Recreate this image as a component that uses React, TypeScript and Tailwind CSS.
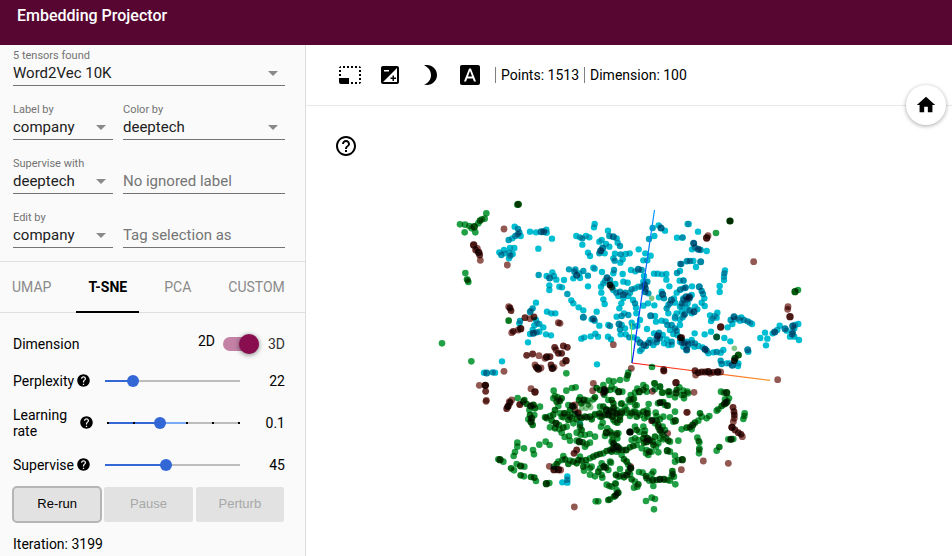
import { useState } from 'react';
import type { ReactNode } from 'react';
import {
  MdBrightness3,
  MdExposure,
  MdFontDownload,
  MdHelp,
  MdHelpOutline,
  MdHome,
  MdPhotoSizeSelectSmall,
} from 'react-icons/md';

type Rgb = [number, number, number];
type Kind = 'cyan' | 'green' | 'brown' | 'pale';

const KINDS: Record<Kind, { color: Rgb; radius: number }> = {
  cyan: { color: [0, 191, 210], radius: 3.2 },
  green: { color: [34, 160, 69], radius: 3.3 },
  brown: { color: [146, 88, 82], radius: 3.4 },
  pale: { color: [130, 200, 140], radius: 2.8 },
};

interface Cluster {
  origin: [number, number];
  points: Partial<Record<Kind, string>>;
}

// Each entry is "x,y" or "x,y,count", in thirds of a unit from the cluster's origin.
const CLUSTERS: Cluster[] = [
  {
    origin: [430, 190],
    points: {
      green:
        '169,70 90,103 105,104 104,127 133,110,3 125,115 136,127 150,92,2 156,88 164,86 145,100 265,43,3 262,44 106,249 113,271 111,268 115,276 118,108',
      cyan:
        '254,110 264,117,2 268,127,2 263,133,2 272,138 256,138,2 247,145 236,150,2 300,125 318,127 333,125,3 341,125,3 349,119 350,128 366,146 325,176 208,187 222,180 214,195,2 225,190 240,174 253,174 238,188 241,197,2 237,205 248,192 326,255,2 367,247 359,264,3 350,258 372,258 379,269 358,286 358,300 318,338 308,355,2 300,366,2 351,365 364,370 376,370 388,290',
      brown:
        '222,117 232,225 151,211 131,165,3 137,180,2 146,187,3 149,195,2 142,175 236,350 240,354,2 243,362,2 285,383,2 312,381,2 300,386',
    },
  },
  {
    origin: [560, 190],
    points: {
      cyan:
        '104,102 102,112 144,122 49,138 67,145,2 78,138 88,142 67,164 60,142 148,138,2 160,140,3 170,145 118,155 125,150 138,162 122,182,4 128,174,3 118,190,2 134,190 148,170 173,158 180,168,2 84,188 90,198 165,191 164,212,2 160,205 182,193,2 197,192 209,190 188,208 181,218 236,178 100,233 104,236 27,238,2 46,238,2 50,256,4 43,245,2 70,243,2 84,257,2 40,265 58,250 60,264 12,270 6,292 22,312,2 34,331 40,340 56,352 70,361 70,382,3 84,289 126,246 141,263,4 150,270,2 162,240,2 160,250 188,252 130,280 123,290 124,308 135,273 166,282 150,285 190,275 203,278 169,308,2 180,305,2 190,314,3 196,308,2 205,318 175,318 190,325 160,300 213,240 235,238,3 245,240,2 226,244 256,190 272,197 250,211 262,211 278,114,2 303,114,4 296,106 315,122 283,138 267,147,2 252,258 262,275,2 254,285,3 256,295,3 255,305,3 265,310,2 245,290,2 235,290 225,295 215,298,2 210,308 250,275 351,143 367,143 383,102 361,222,2 382,213 351,249,2 360,243 282,251 293,251 306,253 319,252 319,269 328,289 308,313,4 312,325,2 305,305 297,322 334,330,3 330,340,2 342,325 325,345 345,338 359,272 371,272 361,298 376,294 350,308 378,320,3 388,325,3 370,325 383,340 365,348 320,355,2 325,370 283,346 264,340 250,347 219,330 225,340,2 228,353 229,370 184,340 178,355 192,370 205,375,2 130,328 134,342 110,365 100,386,3 170,380 185,378,2 272,377,3 285,378 350,370 365,365 375,372,2 388,360 345,385 360,388',
      brown: '150,285,2 155,292',
      pale: '275,325',
    },
  },
  {
    origin: [560, 310],
    points: {
      cyan:
        '95,28 104,32,2 118,47 150,48,2 145,45 177,42,3 185,45 180,58,2 195,55 197,73 208,82,2 220,82 182,73 215,38 218,50 240,30 232,47 64,86 73,82 92,79 106,71 114,80 144,80 153,88 111,163 261,57 288,35 305,32 317,34 293,77,5 297,68,2 290,87,3 300,85,2 282,70 308,75 290,97,2 272,98 280,105 240,98,3 252,105,3 258,108,2 245,118 240,123 232,88 265,98,2 312,100 320,88 335,95,2 325,105 335,104 322,45,2 335,45,2 330,60 345,55,2 350,62,2 340,72 352,75 360,45 345,20 360,95 372,100,2 380,95 380,118,2 385,105 270,90 365,90',
      brown:
        '160,104 100,220 98,242 214,175 311,182 311,178 348,218,3 277,244 380,307 133,238,2 133,245,2 130,250 10,108,2 22,112,2 5,130,2 18,152,3 8,160 0,40 361,83,2 55,308 45,285',
      green:
        '276,171 203,196,2 205,188 200,206 19,190 36,234 47,232 19,242 5,265,2 147,212 161,214 180,210 110,234,2 120,240,2 130,225 138,242,2 150,240 155,230 165,238 176,245,4 187,245 133,255 105,262,2 100,268 57,270,2 72,270,3 64,280,2 82,272 60,262 238,245,3 250,240,2 232,236 258,232 250,225 260,245 225,248 283,220 284,238 300,230 306,248 325,245,2 328,255 348,249,3 350,240,2 345,262 370,242 372,255 384,250 212,255 206,270 212,268 222,266 300,278,2 310,276 294,280 322,287,2 315,285 145,270 155,270,2 160,280,2 120,290 130,290,2 140,300,3 150,305,2 145,315,3 160,295,2 170,310,2 185,305,2 185,280 195,290 180,320,2 200,300 210,318 225,285 220,305 235,310 262,300 264,310 118,310,2 125,320,2 105,312 90,320,2 75,320,2 60,322,2 45,312,2 30,300,2 25,285 40,290 30,320,2 12,310,2 10,322 290,318 310,320 345,305 330,322',
      pale: '85,285 78,295 92,292 90,278 65,295',
    },
  },
  {
    origin: [680, 190],
    points: {
      green: '150,93,3 150,93,2 108,129 345,305,3 354,300 165,505,3 175,495,3 110,441',
      brown:
        '84,137 80,144,3 221,215 324,350 323,358 330,380,3 122,411,3 163,512,2 293,569 45,542,2 47,555 55,548,2 65,546,2 75,546,2 85,545,3 90,550 100,547,2 113,546,4 122,546 5,443,2',
      cyan:
        '26,102 54,125 8,142 41,160,5 45,172,2 55,178,4 62,180,2 80,183 36,178 4,222,2 20,214 30,213,2 40,213 62,215,3 48,231 135,241 133,250,2 132,260 132,270 119,288 119,306 10,271 0,300 10,295 17,292,2 36,289 58,290,3 65,303,2 69,312,2 73,325 65,338 74,348 28,320,4 22,328,2 35,315 10,330,2 5,340,2 15,340 0,350 42,365,4 35,370 52,358 30,362 12,375,2 8,382 45,350 20,355 90,376 98,385 104,378 112,368 93,393 110,383 152,390,2 162,380,4 165,388 143,412 157,402 175,385 184,382 180,392 192,390,2 203,394,2 210,398 216,402 93,425 74,433 44,430 110,441,3 133,444 151,454 5,458,2 15,458 25,462,2 35,458 45,460,2 55,468 35,450 43,470 20,480,3 10,470 75,478,5 80,482,2 68,472 85,490 100,487 110,486,2 122,488 130,480 203,479,3 205,485 122,512,2 125,522,2 140,520 157,526,4 148,520 175,520 174,528 241,444 255,428 262,446 258,466 284,426,4 278,430 292,420 299,407 315,416,3 338,408,4 338,425,2 337,432,3 330,440 343,440 345,405 355,402 357,450 320,422 343,415',
      pale: '163,475',
    },
  },
  {
    origin: [430, 310],
    points: {
      green:
        '236,32,2 36,100 124,154 263,264 283,270,2 371,242 375,258 383,262 387,270 370,265 348,322 360,318',
      brown:
        '250,64,2 272,56,3 245,68 265,60 290,136,2 308,132,2 327,137 350,141,3 360,140,2 345,145 374,112,2 378,120 385,38 385,130,2 320,172,3 325,177,3 333,174 315,165 363,165,2 367,175,4 372,172 222,184 148,226 166,226,5 167,244,2 169,271 303,236 315,246,3 245,270 240,278,2 233,290,2 269,283',
      cyan:
        '302,3 270,33,2 268,40 318,30 322,40 313,46 328,42 340,52 308,60 310,70,4 320,67,2 328,65 300,72 348,73 363,76 294,97 216,154 170,189,3 162,188 188,187,2 195,188',
    },
  },
  {
    origin: [480, 400],
    points: {
      brown:
        '18,4 88,5 85,18,2 80,26,2 120,14 277,17,2 285,30 294,40 290,150,2 282,160,2 208,199 222,209,3 235,209,3 242,210 283,321',
      green:
        '130,5,2 140,12,2 152,18,4 160,15,3 165,25,2 180,20 148,30 150,45,2 155,55,3 153,65,3 158,75,2 145,58 163,45 195,52 200,55 225,30,2 220,44,2 235,18 230,5,2 240,3,2 228,70,4 215,62,2 210,82 225,85,2 237,75 238,88 250,83,2 260,80 245,50 240,40 112,128 112,140 132,145 105,156 101,168 159,150 162,163 178,134 197,125 209,135 60,179,3 70,185 55,178 93,205,2 102,211 110,192 122,198,3 133,200 122,226,2 132,229 153,231,2 163,233,2 168,243 199,251,4 208,249 265,60,2 275,55 290,58,2 305,55,2 320,52,2 335,58,2 345,45 265,45 255,40 280,70 300,75 305,90,2 300,82 290,98 302,104 315,105 329,102 345,110 270,122 254,111 267,108 245,98 298,125,4 290,122 308,127,2 320,133 330,128 315,140 365,40 375,45,2 385,42 378,28 390,30 360,50 395,50 400,35 410,45 368,68 363,80 379,98,4 375,108 390,95 382,85 405,65 410,100 395,105 412,140,3 400,148,2 390,150,2 380,153,2 370,160 360,162,2 350,165,2 340,170,2 330,175 318,180,2 305,182,2 295,180,2 290,190,2 280,185,2 270,182 265,192,2 255,178,2 250,168 247,180 235,185 230,192,2 222,200 310,200,2 320,195 312,212 300,170 330,205 335,200 330,224 345,229 355,215,2 365,225 367,233 372,200,4 378,203,2 365,190 385,210 390,185 360,205 400,130,2 398,120 415,150,2 408,225 380,254 388,258 415,230 406,250 410,270 412,280,2 405,288,2 385,300,2 390,298 347,304 355,304',
      cyan: '247,247 262,229 262,239,2 262,248 300,72',
      pale: '310,10 325,15',
    },
  },
  {
    origin: [610, 370],
    points: {
      green:
        '350,68,4 342,68 333,65 345,88 348,98,3 343,102,3 352,95,2 357,85 335,108,2 325,118 320,122 298,138 290,145 270,130,2 275,140 265,152 255,158,2 248,165,3 240,172,2 230,173,2 215,178 245,178 404,130 403,138 400,147 150,98,2 158,98 173,107 116,102 80,106 70,88 33,102 60,95 137,128 100,125,2 110,130,2 90,135 112,140 75,125 65,130,2 80,140,2 103,145 35,130,2 50,128 20,120 12,112 18,130 8,140,2 30,150,2 22,158,2 10,150 196,152,3 190,155 150,148 140,152,2 128,150 135,160 145,165,2 60,186,5 60,186,5 80,180,2 75,170 88,186 105,182 100,170 103,193,2 100,205,2 112,205,3 118,210,3 110,215,3 102,218,2 128,215,2 130,225,2 85,210 75,205 65,210 135,200,2 150,180,3 155,188,2 145,172,2 158,170 165,180 160,195 150,205 175,212,2 180,215 168,205 160,208 145,220 205,212 172,242,3 180,245 195,257 195,275 217,269,4 205,270 145,247 138,230 125,245 108,250 118,245,2 115,255 110,240 95,235 80,225 70,228,2 60,232,2 48,240,3 38,240,2 28,235,2 18,230,2 8,235,2 5,245,2 12,222,2 5,215 25,190 22,205 20,195 5,190 20,245 35,255 42,268,2 50,275,2 55,285 62,295,4 55,305,2 50,315,3 42,322,2 60,312 40,315 30,318 18,314 30,297 65,328,2 75,335 85,343,2 82,350 72,353 87,306 98,308 108,318,2 110,325,2 118,332 128,330,3 140,330,2 150,328,4 162,328,3 172,330 180,332 130,305 125,312 130,348 187,303,2 188,312,2 192,320 185,318 196,343 17,342 25,368,2 18,375,2 12,380 5,350 3,278 108,393 125,383 135,387 132,418 262,203 266,213 268,217 268,235 268,240 267,250 328,231,2 320,242 363,208,4 355,208 370,207 134,40 150,50 158,68 178,65 208,52 215,75 222,85 232,65',
      brown:
        '125,152,2 232,127 173,190 252,67 162,3 369,112,2 372,125,2 373,135,2 373,145 370,155 366,172,4 375,180,2 385,188,2 393,193,2 397,200 280,273 214,299 355,280 62,290',
    },
  },
];

// A stack of n points darkens its colour a little less than n full multiplications.
function stackedFill(color: Rgb, count: number) {
  const exponent = 1 + (count - 1) * 0.6;
  const channels = color.map((c) => Math.round(255 * Math.pow(c / 255, exponent)));
  return `rgb(${channels.join(',')})`;
}

function Points({ origin, points }: Cluster) {
  return (
    <g>
      {(Object.keys(points) as Kind[]).flatMap((kind) =>
        (points[kind] ?? '').split(' ').map((entry, i) => {
          const [x, y, count = 1] = entry.split(',').map(Number);
          const { color, radius } = KINDS[kind];
          return (
            <circle
              key={`${kind}-${i}`}
              className="mix-blend-multiply"
              cx={origin[0] + x / 3}
              cy={origin[1] + y / 3}
              r={count > 2 ? radius + 0.3 : radius}
              fill={stackedFill(color, count)}
            />
          );
        }),
      )}
    </g>
  );
}

function ScatterPlot() {
  return (
    <svg
      viewBox="306 106 646 450"
      className="isolate block h-auto w-full bg-white"
      role="img"
      aria-label="Embedding scatter plot"
    >
      <defs>
        <linearGradient id="axis-z" gradientUnits="userSpaceOnUse" x1="655" y1="210" x2="632" y2="363">
          <stop offset="0" stopColor="#0099ff" />
          <stop offset="1" stopColor="#0018f0" />
        </linearGradient>
        <linearGradient id="axis-x" gradientUnits="userSpaceOnUse" x1="632" y1="363" x2="770" y2="380">
          <stop offset="0" stopColor="#ff1010" />
          <stop offset="1" stopColor="#ff9a30" />
        </linearGradient>
      </defs>
      <line x1="632" y1="363" x2="770" y2="380.3" stroke="url(#axis-x)" strokeWidth="1.2" />
      {CLUSTERS.map((cluster) => (
        <Points key={cluster.origin.join('-')} {...cluster} />
      ))}
      <line x1="631.5" y1="323" x2="631.5" y2="363" stroke="#6ee06e" />
      <line x1="654.5" y1="210" x2="632" y2="363" stroke="url(#axis-z)" strokeWidth="1.2" />
    </svg>
  );
}

function SelectField({ id, label, value, wide }: { id: string; label: string; value: string; wide?: boolean }) {
  return (
    <div className={wide ? 'col-span-2' : ''}>
      <label htmlFor={id} className="block text-[11px] leading-[13px] text-[#737373]">
        {label}
      </label>
      <div className="relative">
        <select
          id={id}
          className="h-6 w-full appearance-none border-b border-[#737373] bg-transparent pb-0.5 text-[15px] leading-5 text-[#212121] outline-none"
        >
          <option>{value}</option>
        </select>
        <svg viewBox="0 0 10 5" className="pointer-events-none absolute top-[9px] right-[7px] h-[5px] w-2.5" aria-hidden="true">
          <path d="M0 0h10L5 5z" fill="#8a8a8a" />
        </svg>
      </div>
    </div>
  );
}

function TextField({ placeholder }: { placeholder: string }) {
  return (
    <input
      type="text"
      aria-label={placeholder}
      placeholder={placeholder}
      className="h-6 w-full self-end border-b border-[#737373] bg-transparent pb-0.5 text-[15px] leading-5 outline-none placeholder:text-[#757575]"
    />
  );
}

interface SliderProps {
  id: string;
  label: string;
  min: number;
  max: number;
  initial: number;
  format?: (v: number) => string;
  ticks?: number;
}

function SliderRow({ id, label, min, max, initial, format = String, ticks }: SliderProps) {
  const [value, setValue] = useState(initial);
  const percent = ((value - min) / (max - min)) * 100;
  const buffered = ticks ? 60 : percent;
  return (
    <div className={ticks ? 'flex h-[46px] items-center' : 'flex h-[38px] items-center'}>
      <div className="flex w-[92px] items-center gap-0.5">
        <label htmlFor={id} className={ticks ? 'w-16 leading-4' : 'leading-4'}>
          {label}
        </label>
        <MdHelp className="mb-0.5 size-[15px] shrink-0" />
      </div>
      <div className={ticks ? 'relative -mr-[7px] ml-[-4px] flex-1' : 'relative -mx-1.5 flex-1'}>
        <input
          id={id}
          type="range"
          min={min}
          max={max}
          value={value}
          onChange={(e) => setValue(Number(e.target.value))}
          className="block h-3 w-full appearance-none bg-[length:calc(100%-12px)_2px] bg-center bg-no-repeat [&::-webkit-slider-thumb]:relative [&::-webkit-slider-thumb]:z-10 [&::-webkit-slider-thumb]:size-3 [&::-webkit-slider-thumb]:appearance-none [&::-webkit-slider-thumb]:rounded-full [&::-webkit-slider-thumb]:bg-[#3367d6]"
          style={{
            backgroundImage: `linear-gradient(to right, #3367d6 ${percent}%, #7baaf7 ${percent}%, #7baaf7 ${buffered}%, #bdbdbd ${buffered}%)`,
          }}
        />
        {ticks && (
          <div className="pointer-events-none absolute inset-x-1.5 top-[5px] flex justify-between">
            {Array.from({ length: ticks }, (_, i) => (
              <span key={i} className={i === value ? 'size-0.5' : 'size-0.5 bg-black'} />
            ))}
          </div>
        )}
      </div>
      <output htmlFor={id} className={ticks ? 'w-[46px] text-right' : 'w-[45px] text-right'}>
        {format(value)}
      </output>
    </div>
  );
}

const TABS = ['UMAP', 'T-SNE', 'PCA', 'CUSTOM'];

function Tabs() {
  const [active, setActive] = useState('T-SNE');
  return (
    <div role="tablist" className="flex h-[51px] gap-[13px] border-b border-[#e0e0e0]">
      {TABS.map((tab) => (
        <button
          key={tab}
          type="button"
          role="tab"
          aria-selected={tab === active}
          onClick={() => setActive(tab)}
          className={
            tab === active
              ? '-mb-px border-b-2 border-black px-3 font-bold text-black'
              : 'px-3 text-[#8a8a8a]'
          }
        >
          {tab}
        </button>
      ))}
    </div>
  );
}

function Sidebar() {
  return (
    <aside className="w-[306px] shrink-0 border-r border-[#dcdcdc] bg-[#fafafa]">
      <div className="grid grid-cols-[100px_1fr] gap-x-2.5 gap-y-[17px] border-b border-[#e0e0e0] pt-1 pr-5 pb-[13px] pl-[13px]">
        <SelectField id="tensor" label="5 tensors found" value="Word2Vec 10K" wide />
        <SelectField id="label-by" label="Label by" value="company" />
        <SelectField id="color-by" label="Color by" value="deeptech" />
        <SelectField id="supervise-with" label="Supervise with" value="deeptech" />
        <TextField placeholder="No ignored label" />
        <SelectField id="edit-by" label="Edit by" value="company" />
        <TextField placeholder="Tag selection as" />
      </div>
      <Tabs />
      <div className="pt-[13px] pr-5 pb-1 pl-[13px]">
        <div className="flex h-9 items-center">
          <span className="flex-1">Dimension</span>
          <span className="mb-1.5">2D</span>
          <input
            id="dimension"
            type="checkbox"
            role="switch"
            aria-label="3D"
            defaultChecked
            className="relative mr-[9px] ml-2 h-3.5 w-9 appearance-none rounded-full bg-[#c382a5] before:absolute before:-top-[3px] before:left-0 before:size-5 before:rounded-full before:bg-white before:shadow-[0_1px_5px_rgba(0,0,0,0.5)] checked:before:left-4 checked:before:bg-[#880e4f]"
          />
          <label htmlFor="dimension" className="text-[#333]">
            3D
          </label>
        </div>
        <SliderRow id="perplexity" label="Perplexity" min={2} max={100} initial={22} />
        <SliderRow
          id="learning-rate"
          label="Learning rate"
          min={0}
          max={5}
          initial={2}
          ticks={6}
          format={(v) => String(Number(Math.pow(10, v - 3).toFixed(3)))}
        />
        <SliderRow id="supervise" label="Supervise" min={0} max={100} initial={45} />
        <div className="mt-[3px] mr-px flex gap-[3px] font-['Liberation_Sans',Arial,sans-serif] text-[13px]">
          <button type="button" className="h-[35px] flex-1 rounded-sm bg-[#e2e2e2] outline-2 -outline-offset-1 outline-[#b5b5b5]">
            Re-run
          </button>
          <button type="button" disabled className="h-[35px] flex-1 rounded-xs bg-[#e2e2e2] text-[#a8a8a8]">
            Pause
          </button>
          <button type="button" disabled className="h-[35px] flex-1 rounded-xs bg-[#e2e2e2] text-[#a8a8a8]">
            Perturb
          </button>
        </div>
        <p className="mt-3 leading-5">Iteration: 3199</p>
      </div>
    </aside>
  );
}

function ToolButton({ label, children }: { label: string; children: ReactNode }) {
  return (
    <button type="button" aria-label={label} className="size-6">
      {children}
    </button>
  );
}

function Toolbar() {
  return (
    <div className="flex h-[61px] items-center gap-4 border-b border-[#e8e8e8] pl-8">
      <ToolButton label="Select area">
        <MdPhotoSizeSelectSmall className="size-6" />
      </ToolButton>
      <ToolButton label="Contrast">
        <MdExposure className="size-6" />
      </ToolButton>
      <ToolButton label="Night mode">
        <MdBrightness3 className="size-6" />
      </ToolButton>
      <ToolButton label="3D labels">
        <MdFontDownload className="size-6" />
      </ToolButton>
      <div className="-ml-[3px] flex gap-[5px] leading-4">
        <span className="border-l border-[#808080] pl-[5px]">Points: 1513</span>
        <span className="border-l border-[#808080] pl-[5px]">Dimension: 100</span>
      </div>
    </div>
  );
}

export default function App() {
  return (
    <div className="flex min-h-screen flex-col bg-white font-[Roboto,sans-serif] text-sm text-black">
      <header className="h-[45px] bg-[#560630] px-[17px] pt-1.5">
        <h1 className="text-base leading-5 font-medium text-white">Embedding Projector</h1>
      </header>
      <div className="flex flex-1">
        <Sidebar />
        <main className="relative min-w-0 flex-1">
          <Toolbar />
          <ScatterPlot />
          <button type="button" aria-label="Help" className="absolute top-[89px] left-7">
            <MdHelpOutline className="size-6" />
          </button>
          <button
            type="button"
            aria-label="Reset view"
            className="absolute top-10 right-1.5 flex size-10 items-center justify-center rounded-full bg-white shadow-[0_1px_4px_rgba(0,0,0,0.35)]"
          >
            <MdHome className="size-[22px]" />
          </button>
        </main>
      </div>
    </div>
  );
}
